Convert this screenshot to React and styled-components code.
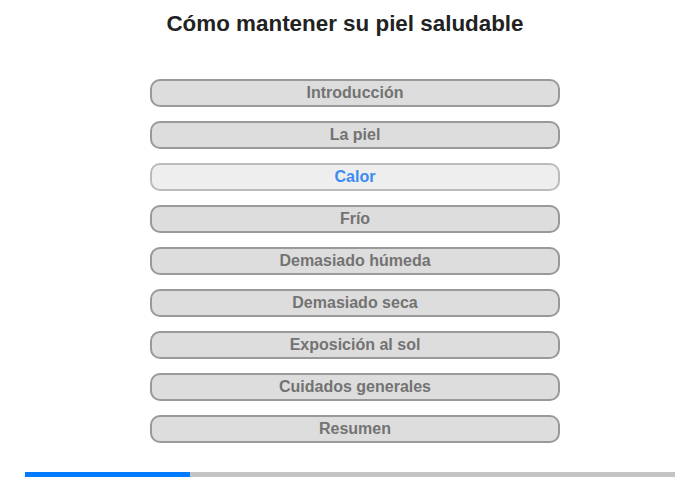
import styled, { createGlobalStyle } from 'styled-components';

const sections = [
  'Introducción',
  'La piel',
  'Calor',
  'Frío',
  'Demasiado húmeda',
  'Demasiado seca',
  'Exposición al sol',
  'Cuidados generales',
  'Resumen',
];

const current = 2;
const progress = 165 / 650;

function App() {
  return (
    <Page>
      <GlobalStyle />
      <Title>Cómo mantener su piel saludable</Title>
      <Menu>
        {sections.map((name, i) => (
          <SectionButton key={name} $active={i === current}>
            {name}
          </SectionButton>
        ))}
      </Menu>
      <Progress>
        <ProgressFill style={{ width: `${progress * 100}%` }} />
      </Progress>
    </Page>
  );
}

const GlobalStyle = createGlobalStyle`
  body {
    margin: 0;
    background: #fff;
    font-family: "Liberation Sans", Arial, sans-serif;
  }
`;

const Page = styled.div`
  width: 700px;
  height: 480px;
  display: flex;
  flex-direction: column;
  align-items: center;
  padding-top: 11px;
  box-sizing: border-box;
`;

const Title = styled.h1`
  margin: 0 10px 0 0;
  font-size: 22.4px;
  line-height: 26px;
  font-weight: 700;
  color: #222;
`;

const Menu = styled.div`
  display: flex;
  flex-direction: column;
  gap: 14px;
  margin: 42px 0 0 10px;
`;

const SectionButton = styled.button`
  width: 410px;
  height: 28px;
  box-sizing: border-box;
  border: 2px solid ${(p) => (p.$active ? '#bbb' : '#999')};
  border-radius: 10px;
  background: ${(p) => (p.$active ? '#eee' : '#ddd')};
  color: ${(p) => (p.$active ? '#3d8bf2' : '#737373')};
  font-family: "Liberation Sans", Arial, sans-serif;
  font-size: 16px;
  font-weight: 700;
  padding: 0;
  cursor: pointer;
`;

const Progress = styled.div`
  width: 650px;
  height: 5px;
  margin-top: 29px;
  background: #c4c4c4;
`;

const ProgressFill = styled.div`
  height: 100%;
  background: #007bff;
`;

export default App;
